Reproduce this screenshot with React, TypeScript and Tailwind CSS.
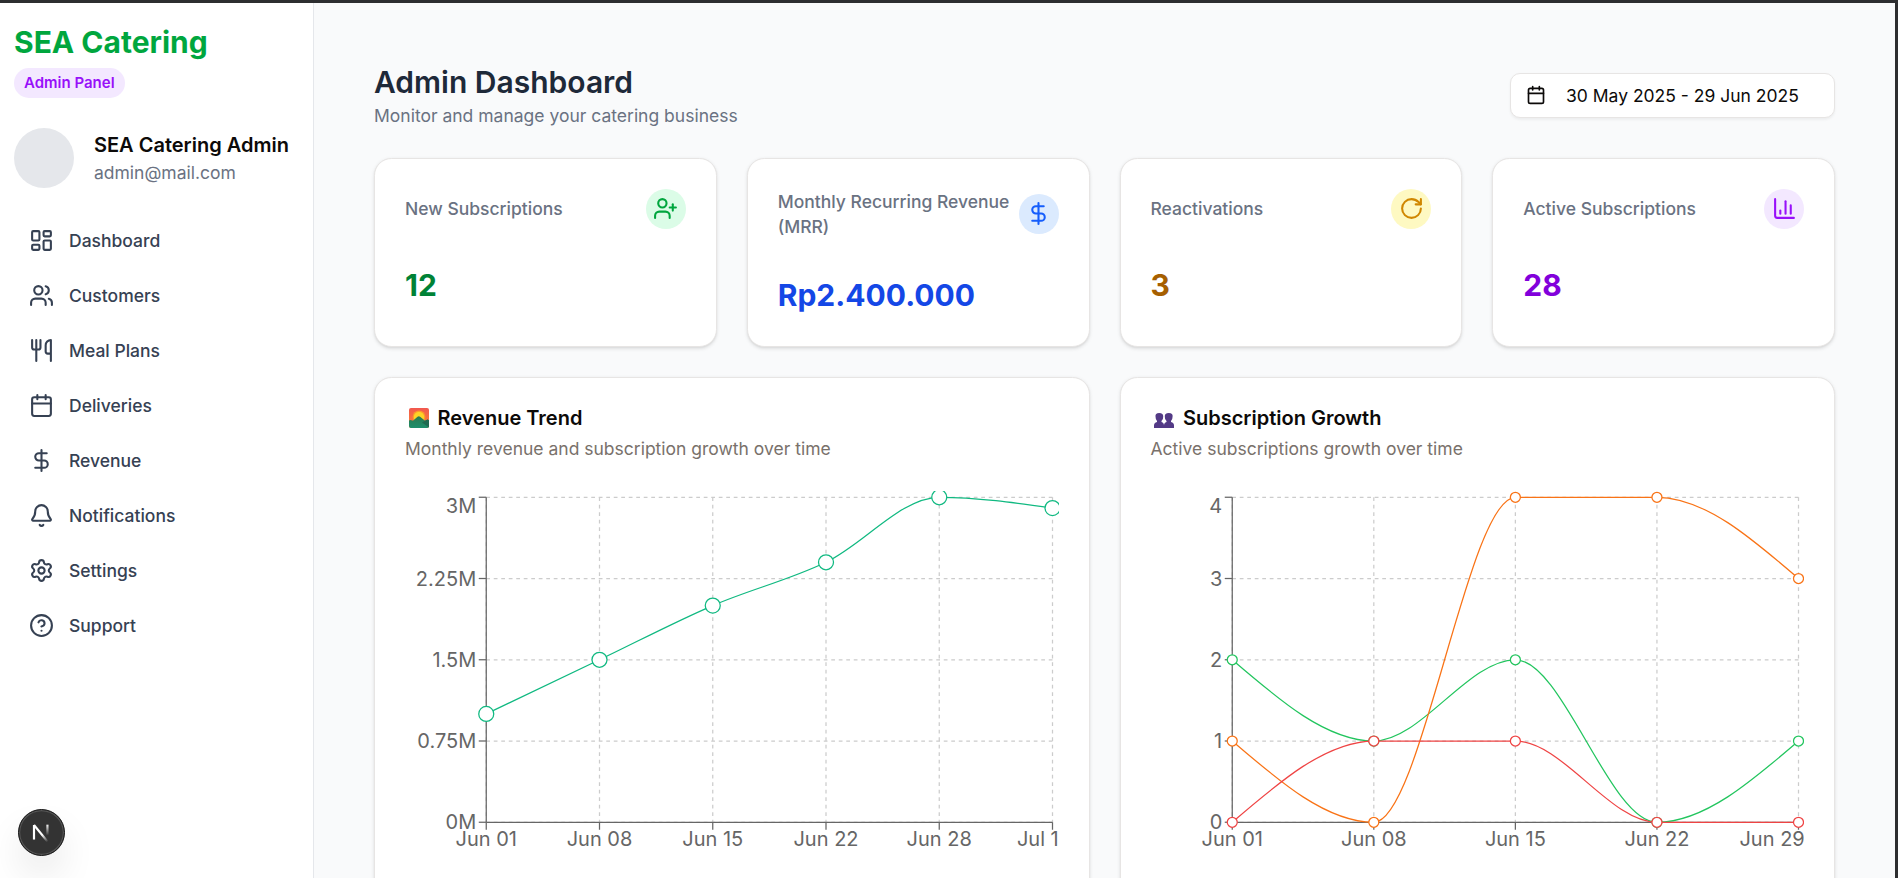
import {
  LayoutDashboard,
  Users,
  Utensils,
  Calendar,
  DollarSign,
  Bell,
  Settings,
  CircleHelp,
  UserPlus,
  RotateCw,
  ChartColumn,
} from "lucide-react";
import type { ComponentType, ReactNode } from "react";

type Icon = ComponentType<{ className?: string; strokeWidth?: number }>;

const NAV: { label: string; icon: Icon }[] = [
  { label: "Dashboard", icon: LayoutDashboard },
  { label: "Customers", icon: Users },
  { label: "Meal Plans", icon: Utensils },
  { label: "Deliveries", icon: Calendar },
  { label: "Revenue", icon: DollarSign },
  { label: "Notifications", icon: Bell },
  { label: "Settings", icon: Settings },
  { label: "Support", icon: CircleHelp },
];

const STATS: { label: string; value: string; icon: Icon; badge: string; color: string }[] = [
  { label: "New Subscriptions", value: "12", icon: UserPlus, badge: "bg-green-100 text-green-600", color: "text-green-700" },
  { label: "Monthly Recurring Revenue (MRR)", value: "Rp2.400.000", icon: DollarSign, badge: "bg-blue-100 text-blue-600", color: "text-blue-700" },
  { label: "Reactivations", value: "3", icon: RotateCw, badge: "bg-yellow-100 text-yellow-600", color: "text-yellow-700" },
  { label: "Active Subscriptions", value: "28", icon: ChartColumn, badge: "bg-purple-100 text-purple-600", color: "text-purple-700" },
];

type Series = { color: string; values: number[] };

const W = 523;
const H = 300;
const LEFT = 65;
const RIGHT = W - 5;
const TOP = 5;
const BOTTOM = 265;

// Monotone cubic interpolation through equally ordered points.
function monotonePath(pts: [number, number][]) {
  const n = pts.length;
  const slope = (i: number) => (pts[i + 1][1] - pts[i][1]) / (pts[i + 1][0] - pts[i][0]);
  const t: number[] = new Array(n).fill(0);
  for (let i = 1; i < n - 1; i++) {
    const h0 = pts[i][0] - pts[i - 1][0];
    const h1 = pts[i + 1][0] - pts[i][0];
    const s0 = slope(i - 1);
    const s1 = slope(i);
    const p = (s0 * h1 + s1 * h0) / (h0 + h1);
    t[i] = (Math.sign(s0) + Math.sign(s1)) * Math.min(Math.abs(s0), Math.abs(s1), 0.5 * Math.abs(p)) || 0;
  }
  t[0] = (3 * slope(0) - t[1]) / 2;
  t[n - 1] = (3 * slope(n - 2) - t[n - 2]) / 2;
  let d = `M${pts[0][0]},${pts[0][1]}`;
  for (let i = 0; i < n - 1; i++) {
    const dx = (pts[i + 1][0] - pts[i][0]) / 3;
    d += `C${pts[i][0] + dx},${pts[i][1] + dx * t[i]},${pts[i + 1][0] - dx},${pts[i + 1][1] - dx * t[i + 1]},${pts[i + 1][0]},${pts[i + 1][1]}`;
  }
  return d;
}

function LineChart({
  labels,
  ticks,
  max,
  series,
  radius,
}: {
  labels: string[];
  ticks: string[];
  max: number;
  series: Series[];
  radius: number;
}) {
  const x = (i: number) => LEFT + ((RIGHT - LEFT) * i) / (labels.length - 1);
  const y = (v: number) => BOTTOM - ((BOTTOM - TOP) * v) / max;
  const tickY = (i: number) => BOTTOM - ((BOTTOM - TOP) * i) / (ticks.length - 1);
  return (
    <svg width={W} height={H} className="block overflow-hidden text-base" fontSize={16}>
      <g stroke="#ccc" strokeDasharray="3 3">
        {ticks.map((t, i) => (
          <line key={t} x1={LEFT} x2={RIGHT} y1={tickY(i)} y2={tickY(i)} />
        ))}
        {labels.map((l, i) => (
          <line key={l} x1={x(i)} x2={x(i)} y1={TOP} y2={BOTTOM} />
        ))}
      </g>
      <g stroke="#666">
        <line x1={LEFT} x2={RIGHT} y1={BOTTOM} y2={BOTTOM} />
        <line x1={LEFT} x2={LEFT} y1={TOP} y2={BOTTOM} />
        {labels.map((l, i) => (
          <line key={l} x1={x(i)} x2={x(i)} y1={BOTTOM} y2={BOTTOM + 6} />
        ))}
        {ticks.map((t, i) => (
          <line key={t} x1={LEFT - 6} x2={LEFT} y1={tickY(i)} y2={tickY(i)} />
        ))}
      </g>
      <g fill="#666">
        {labels.map((l, i) =>
          i === labels.length - 1 ? (
            <text key={l} x={W} y={BOTTOM + 8} dy="0.71em" textAnchor="end">{l}</text>
          ) : (
            <text key={l} x={x(i)} y={BOTTOM + 8} dy="0.71em" textAnchor="middle">{l}</text>
          ),
        )}
        {ticks.map((t, i) => (
          <text key={t} x={LEFT - 8} y={i === ticks.length - 1 ? 12 : tickY(i)} dy="0.355em" textAnchor="end">{t}</text>
        ))}
      </g>
      {series.map((s) => {
        const pts = s.values.map((v, i) => [x(i), y(v)] as [number, number]);
        return (
          <g key={s.color} stroke={s.color}>
            <path d={monotonePath(pts)} fill="none" />
            {pts.map(([cx, cy]) => (
              <circle key={cx} cx={cx} cy={cy} r={radius} fill="#fff" />
            ))}
          </g>
        );
      })}
    </svg>
  );
}

function SunriseIcon() {
  return (
    <svg viewBox="0 0 20 20" className="h-4 w-4">
      <defs>
        <linearGradient id="sky" x1="0" y1="0" x2="0" y2="1">
          <stop offset="0" stopColor="#f1574f" />
          <stop offset="1" stopColor="#fb8a2e" />
        </linearGradient>
        <linearGradient id="hill" x1="0" y1="0" x2="0" y2="1">
          <stop offset="0" stopColor="#2a7a50" />
          <stop offset="1" stopColor="#1d8f6c" />
        </linearGradient>
      </defs>
      <rect width="20" height="20" rx="2" fill="url(#sky)" />
      <circle cx="10" cy="8.8" r="6.4" fill="#fb9a2b" />
      <circle cx="10" cy="9" r="5.2" fill="#fdd226" />
      <path d="M0 12.5l1.500-.5 2.500.8L8.500 8.800q1.300-1.100 2.600 0l4.900 4 2.500-1.300 1.500.8V18a2 2 0 0 1-2 2H2a2 2 0 0 1-2-2z" fill="url(#hill)" />
      <path d="M13 14.500l7 5V12.300l-1.500-.8-2.500 1.300z" fill="#1f6a50" />
    </svg>
  );
}

function PeopleIcon() {
  return (
    <svg viewBox="0 0 20 20" className="h-4 w-4">
      <g fill="#533a86">
        <path d="M1.500 8.500Q1 5 5.200 5t4 3.500q.2 3-1.700 4.500v1q2.500.5 2.500 3.500V20H0v-2.500Q0 14.500 3 14v-1Q1.500 11.500 1.500 8.500z" />
        <path d="M10.800 8.500Q10.500 5 14.800 5t3.800 3.500q0 3-1.600 4.500v1q3 .5 3 3.500V20H10v-2.500q0-3 2.500-3.500v-1q-1.900-1.500-1.700-4.500z" />
      </g>
    </svg>
  );
}

function ChartCard({ icon, title, description, children }: { icon: ReactNode; title: string; description: string; children: ReactNode }) {
  return (
    <section className="flex h-[460px] flex-col gap-6 rounded-[14px] border border-[#e7e5e4] bg-white p-6 shadow-sm">
      <div className="flex flex-col gap-1.5">
        <h2 className="flex items-center gap-[7px] pl-[3px] text-base leading-none font-semibold text-[#0c0a09]">
          {icon}
          {title}
        </h2>
        <p className="text-sm text-[#79716b]">{description}</p>
      </div>
      {children}
    </section>
  );
}

export default function App() {
  return (
    <div className="h-[878px] overflow-hidden border-t-3 border-r-3 border-[#2d2e30] bg-gray-50 font-[Inter,'Liberation_Sans',sans-serif]">
      <div className="flex h-[700px] [zoom:1.25]">
        <aside className="relative flex w-[251.2px] shrink-0 flex-col border-r border-gray-200 bg-white pt-4 pl-[11.2px]">
          <h1 className="text-2xl font-bold text-green-600">SEA Catering</h1>
          <span className="mt-1 self-start rounded-full bg-purple-100 px-2 py-1 text-xs font-semibold text-purple-600">Admin Panel</span>
          <div className="mt-6 flex items-center gap-4">
            <div className="h-12 w-12 rounded-full bg-gray-200" />
            <div>
              <p className="text-base font-semibold whitespace-nowrap text-[#0c0a09]">SEA Catering Admin</p>
              <p className="text-sm text-gray-500">admin@mail.com</p>
            </div>
          </div>
          <nav className="mt-5">
            {NAV.map(({ label, icon: NavIcon }) => (
              <a key={label} className="flex items-center gap-3 p-3 text-sm font-medium text-gray-700">
                <NavIcon className="h-5 w-5" />
                {label}
              </a>
            ))}
          </nav>
          <div className="absolute bottom-[17.3px] left-[14.2px] flex h-[38px] w-[38px] items-center justify-center rounded-full border border-[#171717] bg-[#333] shadow-[inset_0_0_0_1px_#555,0_16px_32px_-8px_rgba(0,0,0,0.24)]">
            <svg viewBox="0 0 16 16" className="h-5 w-5" fill="none">
              <defs>
                <linearGradient id="diag" x1="9" y1="9" x2="12.500" y2="13.500" gradientUnits="userSpaceOnUse">
                  <stop stopColor="#fff" />
                  <stop offset="1" stopColor="#fff" stopOpacity="0" />
                </linearGradient>
                <linearGradient id="stem" x1="11" y1="2.500" x2="11" y2="10" gradientUnits="userSpaceOnUse">
                  <stop stopColor="#fff" />
                  <stop offset="1" stopColor="#fff" stopOpacity="0" />
                </linearGradient>
              </defs>
              <path d="M3.200 12.500V3.200" stroke="#fff" strokeWidth="1.400" />
              <path d="M3.200 3.200L12 14" stroke="url(#diag)" strokeWidth="1.400" />
              <path d="M11.800 3v6.500" stroke="url(#stem)" strokeWidth="1.400" />
            </svg>
          </div>
        </aside>

        <main className="flex min-w-0 flex-1 flex-col gap-6 overflow-hidden p-12">
          <header className="flex items-center justify-between">
            <div>
              <h1 className="text-2xl font-semibold text-gray-800">Admin Dashboard</h1>
              <p className="text-sm text-gray-500">Monitor and manage your catering business</p>
            </div>
            <button className="flex h-9 w-[260px] items-center rounded-lg border border-[#e7e5e4] bg-white px-3 text-sm text-[#0c0a09] shadow-xs">
              <Calendar className="mr-4 h-4 w-4" />
              30 May 2025 - 29 Jun 2025
            </button>
          </header>

          <div className="grid grid-cols-4 gap-6">
            {STATS.map(({ label, value, icon: StatIcon, badge, color }) => (
              <section key={label} className="flex flex-col gap-[30px] rounded-[14px] border border-[#e7e5e4] bg-white p-6 shadow-sm">
                <div className="flex items-center justify-between">
                  <h2 className="text-sm font-medium text-gray-500">{label}</h2>
                  <div className={`rounded-full p-1.5 ${badge}`}>
                    <StatIcon className="h-5 w-5" />
                  </div>
                </div>
                <p className={`text-2xl font-bold ${color}`}>{value}</p>
              </section>
            ))}
          </div>

          <div className="grid grid-cols-2 gap-6">
            <ChartCard icon={<SunriseIcon />} title="Revenue Trend" description="Monthly revenue and subscription growth over time">
              <LineChart
                labels={["Jun 01", "Jun 08", "Jun 15", "Jun 22", "Jun 28", "Jul 1"]}
                ticks={["0M", "0.75M", "1.5M", "2.25M", "3M"]}
                max={3}
                radius={6}
                series={[{ color: "#10b981", values: [1, 1.5, 2, 2.4, 3, 2.9] }]}
              />
            </ChartCard>
            <ChartCard icon={<PeopleIcon />} title="Subscription Growth" description="Active subscriptions growth over time">
              <LineChart
                labels={["Jun 01", "Jun 08", "Jun 15", "Jun 22", "Jun 29"]}
                ticks={["0", "1", "2", "3", "4"]}
                max={4}
                radius={4}
                series={[
                  { color: "#22c55e", values: [2, 1, 2, 0, 1] },
                  { color: "#f97316", values: [1, 0, 4, 4, 3] },
                  { color: "#ef4444", values: [0, 1, 1, 0, 0] },
                ]}
              />
            </ChartCard>
          </div>
        </main>
      </div>
    </div>
  );
}
